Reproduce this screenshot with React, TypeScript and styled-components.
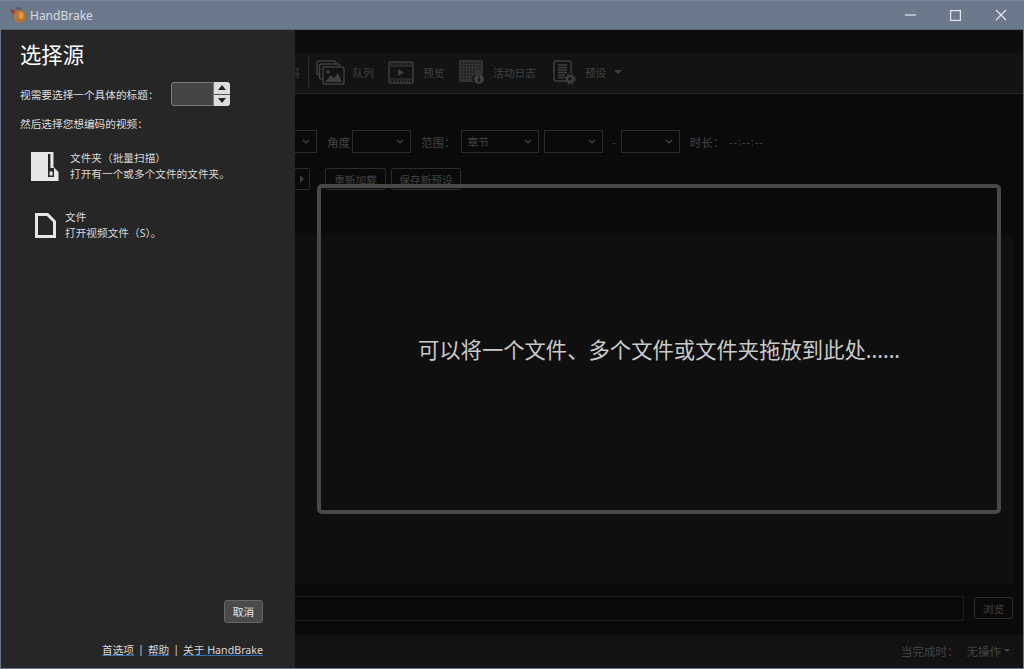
import { createGlobalStyle, styled } from 'styled-components';

const COLON = '\uFF1A';
const OPEN_PAREN = '\uFF08';
const CLOSE_PAREN = '\uFF09';

const GlobalStyle = createGlobalStyle`
  html, body {
    margin: 0;
    padding: 0;
    background: #6b788b;
  }

  body {
    font-family: "Noto Sans", "Noto Sans CJK SC", sans-serif;
  }

  * {
    box-sizing: border-box;
  }
`;

const Styled = {
  Window: styled.div`
    width: 1024px;
    height: 669px;
    display: flex;
    flex-direction: column;
    overflow: hidden;
    border: 1px solid #6b788b;
    border-top-color: #7b8798;
    background: #0a0a0a;
  `,

  TitleBar: styled.div`
    height: 29px;
    flex: none;
    display: flex;
    align-items: center;
    padding-left: 8px;
    background: #6c798c;
    border-bottom: 1px solid #566173;
  `,

  AppName: styled.span`
    margin-left: 3px;
    flex: 1;
    font-size: 12px;
    color: #d8dce2;
  `,

  WindowButton: styled.div`
    width: 45px;
    height: 29px;
    display: flex;
    align-items: center;
    justify-content: center;
  `,

  Body: styled.div`
    position: relative;
    flex: 1;
    min-height: 0;
    display: flex;
    flex-direction: column;
  `,

  MenuBar: styled.div`
    height: 23px;
    flex: none;
    background: #0d0d0d;
  `,

  Toolbar: styled.div`
    height: 41px;
    flex: none;
    display: flex;
    align-items: center;
    padding: 0 0 2px 256px;
    background: #131313;
    border-bottom: 1px solid #262626;
  `,

  ToolLabel: styled.span<{ $gap?: number }>`
    margin-left: ${({ $gap }) => $gap ?? 0}px;
    font-size: 10.67px;
    color: #424242;
    white-space: nowrap;
  `,

  ToolIcon: styled.svg<{ $gap: number }>`
    flex: none;
    margin-left: ${({ $gap }) => $gap}px;
    color: #3f3f3f;
  `,

  ToolDivider: styled.div`
    width: 1px;
    height: 30px;
    margin-left: 8px;
    background: #2a2a2a;
  `,

  ToolArrow: styled.div`
    width: 0;
    height: 0;
    margin-left: 8px;
    border-left: 4px solid transparent;
    border-right: 4px solid transparent;
    border-top: 4px solid #3f3f3f;
  `,

  RangeRow: styled.div`
    height: 23px;
    margin-top: 36px;
    flex: none;
    display: flex;
    align-items: center;
    gap: 10px;
    padding-left: 255px;
  `,

  Field: styled.div<{ $gap: number }>`
    display: flex;
    align-items: center;
    gap: ${({ $gap }) => $gap}px;
  `,

  FieldLabel: styled.span<{ $size?: number; $spacing?: number }>`
    font-size: ${({ $size }) => $size ?? 11.5}px;
    letter-spacing: ${({ $spacing }) => $spacing ?? 0}px;
    color: #444444;
    white-space: nowrap;
  `,

  Select: styled.div<{ $width: number }>`
    width: ${({ $width }) => $width}px;
    height: 23px;
    display: flex;
    align-items: center;
    justify-content: space-between;
    padding: 0 6px;
    font-size: 10.67px;
    color: #424242;
    border: 1px solid #2c2c2c;

    svg {
      margin-left: auto;
    }
  `,

  PresetRow: styled.div`
    height: 22px;
    margin-top: 15px;
    flex: none;
    display: flex;
    align-items: center;
    gap: 5px;
    padding-left: 262px;
  `,

  GhostButton: styled.div<{ $width: number; $gap?: number }>`
    width: ${({ $width }) => $width}px;
    height: 22px;
    margin-left: ${({ $gap }) => $gap ?? 0}px;
    display: flex;
    align-items: center;
    justify-content: center;
    font-size: 10.67px;
    color: #424242;
    border: 1px solid #2c2c2c;
    border-radius: 2px;
  `,

  PlayArrow: styled.div`
    width: 0;
    height: 0;
    margin-left: 30px;
    border-top: 4px solid transparent;
    border-bottom: 4px solid transparent;
    border-left: 4px solid #3f3f3f;
  `,

  Panel: styled.div`
    flex: 1;
    min-height: 0;
    margin: 45px 10px 0;
    background: #0f0f0f;
  `,

  SaveRow: styled.div`
    height: 51px;
    flex: none;
    display: flex;
    align-items: center;
    gap: 10px;
    padding: 0 10px 3px 0;
  `,

  PathInput: styled.div`
    flex: 1;
    height: 25px;
    border: 1px solid #1f1f1f;
  `,

  StatusBar: styled.div`
    height: 33px;
    flex: none;
    display: flex;
    align-items: center;
    justify-content: flex-end;
    gap: 8px;
    padding: 0 13px 2px 0;
    background: #121212;
  `,

  StatusValue: styled.div`
    display: flex;
    align-items: center;
    gap: 3px;
  `,

  StatusArrow: styled.div`
    width: 0;
    height: 0;
    border-left: 3px solid transparent;
    border-right: 3px solid transparent;
    border-top: 3px solid #444444;
  `,

  DropZone: styled.div`
    position: absolute;
    left: 316px;
    top: 154px;
    width: 684px;
    height: 330px;
    display: flex;
    align-items: center;
    justify-content: center;
    padding-bottom: 2px;
    font-size: 21.33px;
    color: #cacaca;
    border: 4px solid #484848;
    border-radius: 5px;
  `,

  Flyout: styled.aside`
    position: absolute;
    left: 0;
    top: 0;
    bottom: 0;
    width: 294px;
    display: flex;
    flex-direction: column;
    padding: 8px 32px 11px 19px;
    color: #e6e6e6;
    background: #262626;
  `,

  FlyoutTitle: styled.h1`
    margin: 0;
    font-size: 21.33px;
    font-weight: 400;
    line-height: 34px;
    color: #ffffff;
  `,

  TitleRow: styled.div`
    height: 24px;
    margin-top: 10px;
    display: flex;
    align-items: center;
    gap: 12px;
  `,

  Hint: styled.span`
    font-size: 10.67px;
    color: #dedede;
    white-space: nowrap;
  `,

  Spinner: styled.div`
    width: 59px;
    height: 24px;
    display: flex;
  `,

  SpinnerInput: styled.div`
    flex: 1;
    background: #444444;
    border: 1px solid #7d7d7d;
    border-radius: 3px 0 0 3px;
  `,

  SpinnerButtons: styled.div`
    width: 16px;
    display: flex;
    flex-direction: column;
    gap: 1px;
    background: #555555;
    border-radius: 0 3px 3px 0;
    overflow: hidden;
  `,

  SpinnerButton: styled.div`
    flex: 1;
    display: flex;
    align-items: center;
    justify-content: center;
    background: #dddddd;
  `,

  SectionHint: styled.div`
    margin-top: 9px;
    height: 16px;
    display: flex;
    align-items: center;
  `,

  SourceOption: styled.div<{ $indent: number; $gap: number; $top: number }>`
    margin-top: ${({ $top }) => $top}px;
    padding-left: ${({ $indent }) => $indent}px;
    display: flex;
    align-items: center;
    gap: ${({ $gap }) => $gap}px;
  `,

  OptionText: styled.div`
    display: flex;
    flex-direction: column;
    font-size: 10.67px;
    line-height: 15.5px;
    color: #d8d8d8;
    white-space: nowrap;
  `,

  Actions: styled.div`
    margin-top: auto;
    display: flex;
    justify-content: flex-end;
  `,

  CancelButton: styled.button`
    width: 39px;
    height: 23px;
    padding: 0;
    font: inherit;
    font-size: 10.67px;
    color: #e8e8e8;
    background: #4a4a4a;
    border: 1px solid #666666;
    border-radius: 3px;
  `,

  Links: styled.div`
    margin-top: 18px;
    height: 16px;
    display: flex;
    justify-content: flex-end;
    align-items: center;
    gap: 4px;
    font-size: 10.67px;
    color: #d8d8d8;
  `,

  FooterLink: styled.a`
    color: #d8d8d8;
    text-decoration: underline;
    text-decoration-color: #2f6db5;
  `,
};

function Logo() {
  return (
    <svg width="18" height="18" viewBox="0 0 18 18">
      <path d="M6 3l2-3 2 2 3-1-1 4z" fill="#57606b" />
      <ellipse cx="10.5" cy="10.5" rx="6" ry="6.5" fill="#b8742c" />
      <ellipse cx="12" cy="9.5" rx="2.5" ry="3.5" fill="#d59a4e" />
      <path d="M1 3l5 1 0 3-3 1z" fill="#b03a30" />
      <path d="M2 8h3l0 8H3z" fill="#5f7596" />
    </svg>
  );
}

function QueueIcon() {
  return (
    <Styled.ToolIcon $gap={7} width="29" height="25" viewBox="0 0 29 25" fill="none" stroke="currentColor" strokeWidth="1.5">
      <rect x="1" y="1" width="19" height="14" rx="2" />
      <rect x="3.5" y="4" width="20" height="15" rx="2" fill="#131313" />
      <rect x="7" y="7" width="21" height="17" rx="2" fill="#131313" />
      <circle cx="12" cy="12" r="1.8" fill="currentColor" stroke="none" />
      <path d="M9 22l6-7 3 3 4-5 4 9z" fill="currentColor" stroke="none" />
    </Styled.ToolIcon>
  );
}

function PreviewIcon() {
  return (
    <Styled.ToolIcon $gap={14} width="26" height="23" viewBox="0 0 26 23" fill="none" stroke="currentColor">
      <rect x="1" y="1" width="24" height="21" rx="2" strokeWidth="1.5" />
      <path d="M2 5h22M2 18h22" strokeWidth="1" />
      <path d="M3 3h20M3 20h20" strokeWidth="1.5" strokeDasharray="1.5 1.5" />
      <path d="M10 8l6 3.5-6 3.5z" fill="currentColor" stroke="none" />
    </Styled.ToolIcon>
  );
}

function ActivityIcon() {
  return (
    <Styled.ToolIcon $gap={15} width="26" height="24" viewBox="0 0 26 24" fill="currentColor">
      <path d="M2 0h20a2 2 0 0 1 2 2v12h-6a5 5 0 0 0-4 8H2a2 2 0 0 1-2-2V2a2 2 0 0 1 2-2z" opacity="0.75" />
      <path d="M2 3h20M2 6h20M2 9h20M2 12h14M2 15h11M2 18h10" stroke="#131313" strokeWidth="1.2" strokeDasharray="2 1" />
      <circle cx="20" cy="19" r="5" />
      <rect x="19.2" y="18" width="1.6" height="4" fill="#131313" />
      <rect x="19.2" y="15.6" width="1.6" height="1.5" fill="#131313" />
    </Styled.ToolIcon>
  );
}

function PresetIcon() {
  return (
    <Styled.ToolIcon $gap={17} width="23" height="25" viewBox="0 0 23 25" fill="none" stroke="currentColor">
      <path d="M14 21H3a2 2 0 0 1-2-2V3a2 2 0 0 1 2-2h13a2 2 0 0 1 2 2v10" strokeWidth="1.5" />
      <path d="M5 5h9M5 7.5h9M5 10h9M5 12.5h9M5 15h7M5 17.5h6" strokeWidth="1.3" />
      <circle cx="17" cy="19" r="3" strokeWidth="2.4" />
      <circle cx="17" cy="19" r="5" strokeWidth="1.4" strokeDasharray="2 2" />
    </Styled.ToolIcon>
  );
}

function Chevron() {
  return (
    <svg width="8" height="5" viewBox="0 0 8 5" fill="none" stroke="#444444" strokeWidth="1.2">
      <path d="M1 1l3 3 3-3" />
    </svg>
  );
}

function FolderIcon() {
  return (
    <svg width="28" height="29" viewBox="0 0 28 29">
      <path d="M0 0h22.5v15l5 5v9H0z" fill="#e6e6e6" />
      <rect x="17" y="2" width="2.4" height="14" fill="#262626" />
      <rect x="17" y="16" width="6" height="9" fill="#262626" />
      <rect x="18.6" y="19.5" width="3" height="4" fill="#e6e6e6" />
    </svg>
  );
}

function FileIcon() {
  return (
    <svg width="21" height="25" viewBox="0 0 21 25" fill="none" stroke="#e6e6e6" strokeWidth="3">
      <path d="M1.5 1.5H12.5L19.5 8.5V23.5H1.5Z" />
    </svg>
  );
}

function App() {
  return (
    <>
      <GlobalStyle />
      <Styled.Window>
        <Styled.TitleBar>
          <Logo />
          <Styled.AppName>HandBrake</Styled.AppName>
          <Styled.WindowButton>
            <svg width="11" height="2" viewBox="0 0 11 2">
              <rect width="11" height="1.2" y="0.4" fill="#e4e7eb" />
            </svg>
          </Styled.WindowButton>
          <Styled.WindowButton>
            <svg width="11" height="11" viewBox="0 0 11 11" fill="none" stroke="#e4e7eb" strokeWidth="1.2">
              <rect x="0.6" y="0.6" width="9.8" height="9.8" />
            </svg>
          </Styled.WindowButton>
          <Styled.WindowButton>
            <svg width="12" height="12" viewBox="0 0 12 12" fill="none" stroke="#e4e7eb" strokeWidth="1.2">
              <path d="M1 1l10 10M11 1L1 11" />
            </svg>
          </Styled.WindowButton>
        </Styled.TitleBar>

        <Styled.Body>
          <Styled.MenuBar />
          <Styled.Toolbar>
            <Styled.ToolLabel>开始编码</Styled.ToolLabel>
            <Styled.ToolDivider />
            <QueueIcon />
            <Styled.ToolLabel $gap={8}>队列</Styled.ToolLabel>
            <PreviewIcon />
            <Styled.ToolLabel $gap={9}>预览</Styled.ToolLabel>
            <ActivityIcon />
            <Styled.ToolLabel $gap={8}>活动日志</Styled.ToolLabel>
            <PresetIcon />
            <Styled.ToolLabel $gap={9}>预设</Styled.ToolLabel>
            <Styled.ToolArrow />
          </Styled.Toolbar>

          <Styled.RangeRow>
            <Styled.Select $width={61}>
              <Chevron />
            </Styled.Select>
            <Styled.Field $gap={2}>
              <Styled.FieldLabel>角度</Styled.FieldLabel>
              <Styled.Select $width={59}>
                <Chevron />
              </Styled.Select>
            </Styled.Field>
            <Styled.Field $gap={5}>
              <Styled.FieldLabel>范围{COLON}</Styled.FieldLabel>
              <Styled.Select $width={78}>
                章节
                <Chevron />
              </Styled.Select>
              <Styled.Select $width={59}>
                <Chevron />
              </Styled.Select>
            </Styled.Field>
            <Styled.Field $gap={5}>
              <Styled.FieldLabel $size={10}>-</Styled.FieldLabel>
              <Styled.Select $width={59}>
                <Chevron />
              </Styled.Select>
            </Styled.Field>
            <Styled.Field $gap={5}>
              <Styled.FieldLabel>时长{COLON}</Styled.FieldLabel>
              <Styled.FieldLabel $size={10.67} $spacing={1}>
                --:--:--
              </Styled.FieldLabel>
            </Styled.Field>
          </Styled.RangeRow>

          <Styled.PresetRow>
            <Styled.GhostButton $width={47}>
              <Styled.PlayArrow />
            </Styled.GhostButton>
            <Styled.GhostButton $width={61} $gap={10}>
              重新加载
            </Styled.GhostButton>
            <Styled.GhostButton $width={70}>保存新预设</Styled.GhostButton>
          </Styled.PresetRow>

          <Styled.Panel />

          <Styled.SaveRow>
            <Styled.PathInput />
            <Styled.GhostButton $width={39}>浏览</Styled.GhostButton>
          </Styled.SaveRow>

          <Styled.StatusBar>
            <Styled.FieldLabel>当完成时{COLON}</Styled.FieldLabel>
            <Styled.StatusValue>
              <Styled.FieldLabel>无操作</Styled.FieldLabel>
              <Styled.StatusArrow />
            </Styled.StatusValue>
          </Styled.StatusBar>

          <Styled.DropZone>可以将一个文件、多个文件或文件夹拖放到此处......</Styled.DropZone>

          <Styled.Flyout>
            <Styled.FlyoutTitle>选择源</Styled.FlyoutTitle>
            <Styled.TitleRow>
              <Styled.Hint>视需要选择一个具体的标题{COLON}</Styled.Hint>
              <Styled.Spinner>
                <Styled.SpinnerInput />
                <Styled.SpinnerButtons>
                  <Styled.SpinnerButton>
                    <svg width="8" height="5" viewBox="0 0 8 5">
                      <path d="M4 0l4 5H0z" fill="#222222" />
                    </svg>
                  </Styled.SpinnerButton>
                  <Styled.SpinnerButton>
                    <svg width="8" height="5" viewBox="0 0 8 5">
                      <path d="M0 0h8L4 5z" fill="#222222" />
                    </svg>
                  </Styled.SpinnerButton>
                </Styled.SpinnerButtons>
              </Styled.Spinner>
            </Styled.TitleRow>
            <Styled.SectionHint>
              <Styled.Hint>然后选择您想编码的视频{COLON}</Styled.Hint>
            </Styled.SectionHint>

            <Styled.SourceOption $indent={11} $gap={11} $top={20}>
              <FolderIcon />
              <Styled.OptionText>
                <span>文件夹{OPEN_PAREN}批量扫描{CLOSE_PAREN}</span>
                <span>打开有一个或多个文件的文件夹。</span>
              </Styled.OptionText>
            </Styled.SourceOption>

            <Styled.SourceOption $indent={15} $gap={9} $top={28}>
              <FileIcon />
              <Styled.OptionText>
                <span>文件</span>
                <span>打开视频文件{OPEN_PAREN}S{CLOSE_PAREN}。</span>
              </Styled.OptionText>
            </Styled.SourceOption>

            <Styled.Actions>
              <Styled.CancelButton>取消</Styled.CancelButton>
            </Styled.Actions>
            <Styled.Links>
              <Styled.FooterLink>首选项</Styled.FooterLink>|<Styled.FooterLink>帮助</Styled.FooterLink>|
              <Styled.FooterLink>关于 HandBrake</Styled.FooterLink>
            </Styled.Links>
          </Styled.Flyout>
        </Styled.Body>
      </Styled.Window>
    </>
  );
}

export default App;
